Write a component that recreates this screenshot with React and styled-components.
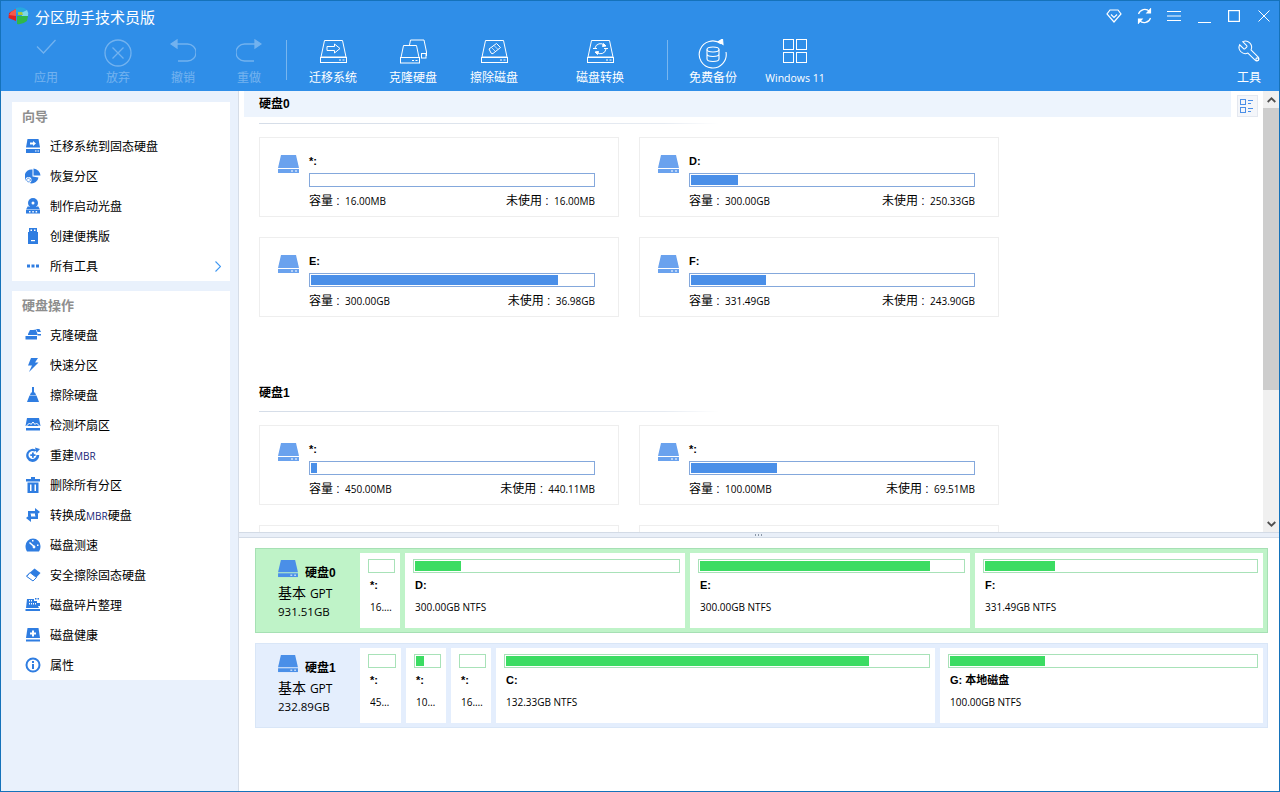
import React from 'react';
import styled, { createGlobalStyle } from 'styled-components';

const Global = createGlobalStyle`
  html, body { margin: 0; padding: 0; height: 792px; overflow: hidden; }
  body { font-family: "Liberation Sans", "Noto Sans CJK SC", sans-serif; font-size: 12px; color: #000; }
`;

const LATIN = '"Open Sans", "Noto Sans CJK SC", sans-serif';

const Window = styled.div`
  width: 1280px; height: 792px; box-sizing: border-box; display: flex; flex-direction: column;
  border: 1px solid #1572ba; background: #fff; overflow: hidden;
`;
const TitleBar = styled.div`
  height: 30px; flex: none; background: #2f8ee8; display: flex; align-items: center; color: #fff; padding-left: 7px;
`;
const TitleText = styled.div`
  margin-left: 6px; font-size: 15px; flex: 1;
`;
const WinButton = styled.div`
  width: 30px; height: 30px; display: flex; align-items: center; justify-content: center; flex: none;
`;
const WinButtons = styled.div`
  display: flex;
`;
const Toolbar = styled.div`
  height: 60px; flex: none; background: #2f8ee8; display: flex; padding-left: 9px;
`;
const Tool = styled.div`
  width: ${p => p.$w}px; flex: none; display: flex; flex-direction: column; align-items: center; color: #fff;
  opacity: ${p => (p.$off ? 0.32 : 1)};
`;
const ToolIcon = styled.div`
  height: 40px; padding-top: 8px; box-sizing: border-box; display: flex; align-items: flex-start; justify-content: center;
`;
const ToolLabel = styled.div`
  font-size: ${p => (p.$latin ? 11 : 12)}px; line-height: 14px; white-space: nowrap;
  ${p => p.$latin && `font-family: ${LATIN}; font-size: 10.5px;`}
`;
const ToolSep = styled.div`
  width: 1px; height: 40px; margin: 9px 0 0 ${p => p.$l || 0}px; background: #78b6ef; flex: none;
`;
const Spacer = styled.div` flex: 1; `;

const Body = styled.div`
  flex: 1; display: flex; min-height: 0;
`;
const Sidebar = styled.div`
  width: 238px; flex: none; box-sizing: border-box; background: #e9f1fc; border-right: 1px solid #d6dde7;
  padding: 11px 8px 0 11px; display: flex; flex-direction: column; gap: 10px;
`;
const Panel = styled.div`
  background: #fff; display: flex; flex-direction: column;
`;
const PanelTitle = styled.div`
  height: 29px; line-height: 30px; padding-left: 10px; color: #8e8e8e; font-weight: bold; font-size: 13px; flex: none;
`;
const NavRow = styled.div`
  height: 30px; box-sizing: border-box; display: flex; align-items: center; padding: 0 0 2px 12px; position: relative; flex: none;
`;
const NavIcon = styled.div`
  width: 18px; height: 18px; margin-right: 8px; display: flex; align-items: center; justify-content: center; position: relative; top: 1px;
`;
const NavText = styled.span`
  font-size: 12px; white-space: nowrap;
`;
const Latin = styled.span`
  font-family: ${LATIN}; font-size: 10px; color: #222a7a;
`;
const Chevron = styled.div`
  position: absolute; right: 9px; top: 10px; width: 6px; height: 11px; display: flex;
`;

const Main = styled.div`
  flex: 1; min-width: 0; display: flex; flex-direction: column;
`;
const Upper = styled.div`
  height: 441px; flex: none; display: flex;
`;
const Scroller = styled.div`
  flex: 1; min-width: 0; overflow: hidden;
`;
const HeaderRow = styled.div`
  display: flex; height: 26px; padding-left: 5px;
`;
const HeaderBand = styled.div`
  width: 987px; height: 26px; background: #edf4fd; display: flex; align-items: center; padding-left: 15px; box-sizing: border-box;
`;
const DiskTitle = styled.div`
  font-weight: bold; font-size: 12px; height: 20px; line-height: 20px;
`;
const ViewButton = styled.div`
  width: 21px; height: 22px; margin: 4px 0 0 6px; box-sizing: border-box; border: 1px solid #e4e8f0; background: #f4f6fa;
  display: flex; align-items: center; justify-content: center;
`;
const Divider = styled.div`
  height: 1px; width: 460px; margin: ${p => p.$t}px 0 13px 20px;
  background: linear-gradient(90deg, #d5dde8, #e6ebf2 88%, #ffffff);
`;
const SecondTitle = styled(DiskTitle)`
  margin: 66px 0 0 20px;
`;
const Cards = styled.div`
  display: grid; grid-template-columns: 360px 360px; grid-auto-rows: 80px; gap: 20px; margin-left: 20px;
`;
const Card = styled.div`
  border: 1px solid #eeeeee; box-sizing: border-box; display: flex; padding: 16px 23px 0 18px;
`;
const CardIcon = styled.div`
  width: 21px; height: 20px; margin: 1px 10px 0 0; flex: none;
`;
const CardBody = styled.div`
  flex: 1; min-width: 0; display: flex; flex-direction: column;
`;
const CardName = styled.div`
  font-weight: bold; font-size: 11px; height: 19px; line-height: 14px;
`;
const CardBar = styled.div`
  height: 14px; box-sizing: border-box; border: 1px solid #84a8dc; padding: 1px; background: #fff;
`;
const CardFill = styled.div`
  height: 100%; background: #4a8fe8;
`;
const CardMeta = styled.div`
  display: flex; justify-content: space-between; margin-top: 7px; font-size: 12px; line-height: 14px; white-space: nowrap;
`;
const Num = styled.span` font-family: ${LATIN}; font-size: 10px; margin-left: 2px; `;

const ScrollTrack = styled.div`
  width: 16px; flex: none; background: #f0f0f0; display: flex; flex-direction: column;
`;
const ScrollArrow = styled.div`
  height: 17px; flex: none; display: flex; align-items: center; justify-content: center; background: #f0f0f0;
`;
const ScrollThumb = styled.div`
  height: 282px; flex: none; background: #cdcdcd;
`;
const Splitter = styled.div`
  height: 6px; flex: none; box-sizing: border-box; background: #e9eff8; border-top: 1px solid #d3dbe6; border-bottom: 1px solid #d3dbe6;
  display: flex; align-items: center; justify-content: center; gap: 1px;
`;
const Dot = styled.span`
  width: 1px; height: 2px; background: #8b98a8; margin: 0 1px 0 0;
`;
const Lower = styled.div`
  flex: 1; padding: 10px 0 0 16px; display: flex; flex-direction: column; gap: 10px;
`;
const DiskRow = styled.div`
  width: 1013px; height: 85px; box-sizing: border-box; display: flex; gap: 5px; padding: 4px 4px 4px 0;
  background: ${p => (p.$on ? '#bff3c8' : '#e4eefd')}; border: 1px solid ${p => (p.$on ? '#a6e0b4' : '#d9e6f7')};
`;
const DiskHead = styled.div`
  width: 99px; flex: none; box-sizing: border-box; padding: 7px 0 0 22px;
`;
const HeadTop = styled.div`
  display: flex; align-items: center; height: 18px;
`;
const HeadName = styled.div`
  font-weight: bold; font-size: 12px; margin-left: 7px; margin-top: 7px; line-height: 14px;
`;
const HeadLine = styled.div`
  font-size: 14px; line-height: 20px; margin-top: 5px; white-space: nowrap;
  & > span { font-family: ${LATIN}; font-size: 12px; }
`;
const HeadSize = styled.div`
  font-family: ${LATIN}; font-size: 11.500px; line-height: 18px; margin-top: -1px;
`;
const Cell = styled.div`
  width: ${p => p.$w}px; flex: none; background: #fff; box-sizing: border-box; padding: 6px 5px 0 8px; display: flex; flex-direction: column;
`;
const CellBar = styled.div`
  height: 14px; box-sizing: border-box; border: 1px solid #a8e2b8; padding: 1px; background: #fff; flex: none;
`;
const CellFill = styled.div`
  height: 100%; background: #3bdc62;
`;
const CellName = styled.div`
  font-weight: bold; font-size: 11px; line-height: 14px; margin: 5px 0 0 2px; white-space: nowrap;
`;
const CellInfo = styled.div`
  font-family: ${LATIN}; font-size: 10px; line-height: 14px; margin: 8px 3px 0 2px; white-space: nowrap; overflow: hidden; text-overflow: ellipsis;
`;

const Stroke = ({ w, h, vb, sw = 1, children, op }) => (
  <svg width={w} height={h} viewBox={vb || `0 0 ${w} ${h}`} fill="none" stroke="#fff" strokeWidth={sw} opacity={op}>{children}</svg>
);

const DiskBase = () => (
  <>
    <path d="M4.500 1.500H22.500L26 18H1Z" />
    <rect x=".5" y="18.500" width="26" height="5" />
    <path d="M19 21h2M22.500 21h2" />
  </>
);
const ToolIcons = {
  check: <Stroke w={20} h={15} sw={1.3}><path d="M1 7.500 7.500 14 19.500 1" /></Stroke>,
  cancel: <Stroke w={28} h={28} sw={1.3}><circle cx="14" cy="14" r="13" /><path d="M8.500 8.500 19.500 19.500M19.500 8.500 8.500 19.500" /></Stroke>,
  undo: <Stroke w={26} h={24} sw={1.3}><path d="M7 5H17.500a8.500 8.500 0 0 1 0 17H8" /><path d="M1 5 7 1V9Z" fill="#fff" /></Stroke>,
  redo: <Stroke w={26} h={24} sw={1.3}><path d="M19 5H8.500a8.500 8.500 0 0 0 0 17H18" /><path d="M25 5 19 1V9Z" fill="#fff" /></Stroke>,
  migrate: <Stroke w={27} h={24}><DiskBase /><path d="M7 7.500H14.500V5L20 9.500 14.500 14V11.500H7Z" /></Stroke>,
  clone: <Stroke w={27} h={25}><path d="M9.500 6 10.500 1H24L26.500 13V17" /><path d="M3.500 6.500H16.500L19 18.500H1Z" /><rect x=".5" y="18.500" width="19" height="5.500" /><rect x="21.500" y="14.500" width="4.500" height="4.500" /><path d="M12 21.500h2M15.500 21.500h2" /></Stroke>,
  erase: <Stroke w={27} h={24}><DiskBase /><path d="M8 10 15.500 4.500 19.500 8.500 12 14.500Q11 15 10 14Z" /><path d="M10.500 8.500 14.500 12.500M13 6.500 17 10.500" strokeWidth=".7" /></Stroke>,
  convert: <Stroke w={27} h={24}><DiskBase /><path d="M8 9a5.500 5.500 0 0 1 9.500-2.500M19 10a5.500 5.500 0 0 1-9.500 3" /><path d="M16.500 4.500 19 7 15.500 7.500ZM10.500 15.500 8 13 11.500 12.500Z" fill="#fff" /><path d="M6 9.500h4M17 9.500h4" /></Stroke>,
  backup: <Stroke w={30} h={30} sw={1.1}><path d="M23 4.800A13.500 13.500 0 1 0 28 13" /><path d="M20.500 2.500 24.500 0 25 5.500Z" fill="#fff" /><ellipse cx="15" cy="10.500" rx="6" ry="2.500" /><path d="M9 10.500V20c0 1.500 2.700 2.500 6 2.500s6-1 6-2.500V10.500M9 15c0 1.500 2.700 2.500 6 2.500s6-1 6-2.500" /></Stroke>,
  windows: <Stroke w={24} h={24}><rect x=".5" y=".5" width="10" height="10" /><rect x="13.500" y=".5" width="10" height="10" /><rect x=".5" y="13.500" width="10" height="10" /><rect x="13.500" y="13.500" width="10" height="10" /></Stroke>,
  tools: (
    <Stroke w={25} h={25} vb="0 0 24 24" sw={1}>
      <g transform="translate(24 0) scale(-1 1)">
        <path d="M14.700 6.300a1 1 0 0 0 0 1.400l1.600 1.600a1 1 0 0 0 1.400 0l3.770-3.770a6 6 0 0 1-7.940 7.940l-6.910 6.910a2.120 2.120 0 0 1-3-3l6.910-6.910a6 6 0 0 1 7.940-7.940l-3.760 3.760z" />
      </g>
      <circle cx="19.500" cy="19.500" r="1.400" />
    </Stroke>
  ),
};

const B = '#2f7de1';
const Solid = ({ children, size = 16 }) => <svg width={size} height={size} viewBox="0 0 16 16" fill={B}>{children}</svg>;
const NavIcons = {
  migrate: <Solid><path d="M2.500 1H13.500L15 9.500H1Z" /><rect x="1" y="11" width="14" height="4" /><path d="M5 4.500H8V3l3 2.500L8 8V6.500H5Z" fill="#fff" /><rect x="10" y="12.500" width="1.500" height="1" fill="#fff" /><rect x="12.500" y="12.500" width="1.500" height="1" fill="#fff" /></Solid>,
  restore: <Solid><path d="M8.500 0.500A7.500 7.500 0 0 1 15.500 7.500H8.500Z" /><path d="M7.500 1.500V8.500L13.500 9.500A7 7 0 1 1 7.500 1.500Z" /><circle cx="3.500" cy="12" r="3" fill="#fff" /><circle cx="3.500" cy="12" r="1.800" fill="none" stroke={B} strokeWidth="1" strokeDasharray="1.500 .7" /></Solid>,
  boot: <Solid><circle cx="8" cy="5" r="5" /><circle cx="8" cy="5" r="1.500" fill="#fff" /><path d="M3 8 1 11.500H15L13 8 12 9H4Z" /><rect x="1" y="12" width="14" height="3.500" /><rect x="4" y="13" width="1.500" height="1.500" fill="#fff" /><rect x="7.300" y="13" width="1.500" height="1.500" fill="#fff" /><rect x="10.600" y="13" width="1.500" height="1.500" fill="#fff" /></Solid>,
  usb: <Solid><rect x="4" y="0" width="8" height="4" /><rect x="5.500" y="1.500" width="1.500" height="1.500" fill="#fff" /><rect x="9" y="1.500" width="1.500" height="1.500" fill="#fff" /><rect x="3" y="4" width="10" height="12" /><rect x="6" y="12" width="4" height="1.200" fill="#fff" /></Solid>,
  dots: <Solid><rect x="2" y="6.500" width="3" height="3" /><rect x="6.500" y="6.500" width="3" height="3" /><rect x="11" y="6.500" width="3" height="3" /></Solid>,
  clone: <Solid><path d="M3 7 5 3H11L12.500 7V8H3Z" /><rect x="0.500" y="9" width="11.500" height="3.500" /><path d="M8 2H14.500L16 5H12.500L11.500 2.500Z" /><rect x="12.500" y="7" width="3.500" height="1.500" /></Solid>,
  bolt: <Solid><path d="M6 1H13L10 5.500H13.500L4 15 7 8.500H3Z" /></Solid>,
  broom: <Solid><rect x="7" y="0" width="2" height="6" /><path d="M6 5.500H10L11 8H5Z" /><path d="M4.500 8.500H11.500L14 15H2Z" /></Solid>,
  scan: <Solid><path d="M2 1H14L15.500 9H0.500Z" /><path d="M1.500 9 4.500 6 6 7.500 8 5 10 7.500 11.500 6 14.500 9" fill="none" stroke="#fff" strokeWidth="1" /><rect x="1" y="11" width="14" height="2.500" /></Solid>,
  rebuild: <Solid><path d="M12 3.500A6.500 6.500 0 1 0 14.200 8H11.500A4 4 0 1 1 9.500 4.500Z" /><path d="M10 0.500 15 2 11.500 6Z" /><path d="M7 5.500H8.800V7.200H10.500V9H8.800V10.700H7V9H5.300V7.200H7Z" /></Solid>,
  trash: <Solid><rect x="6" y="0" width="4" height="2" /><rect x="1" y="2" width="14" height="2.500" /><path d="M2.500 5.500H13.500V16H2.500ZM5 7.500V14H6.500V7.500ZM9.500 7.500V14H11V7.500Z" fillRule="evenodd" /></Solid>,
  swap: <Solid><path d="M3 4H10V1L15 5 10 9V6.500H5.500V9H3Z" /><path d="M13 12H6V15L1 11 6 7V9.500H10.500V7H13Z" /></Solid>,
  gauge: <Solid><path d="M8 1.500A7.500 7.500 0 0 0 0.500 9C.5 11 1 13 2 14.500H14C15 13 15.500 11 15.500 9A7.500 7.500 0 0 0 8 1.500Z" /><path d="M4.500 5.500 9 9.500" stroke="#fff" strokeWidth="1.500" /><circle cx="9" cy="10" r="1.400" fill="#fff" /><rect x="7" y="3" width="1.500" height="1.500" fill="#fff" /><rect x="12" y="7.500" width="1.500" height="1.500" fill="#fff" /></Solid>,
  eraser: <Solid><path d="M9.500 1.500 15.500 6 8 14 1 9Z" /><path d="M5 5.500 11.500 10.500 8 14 1.800 9.500Z" fill="#fff" stroke={B} strokeWidth="1" /></Solid>,
  defrag: <Solid><path d="M2 2H9V4H12V6H15V9H13L14 11H1Z" /><rect x="0.500" y="12" width="14.500" height="2" /><g fill="#fff"><rect x="4" y="3" width="1" height="1.500" /><rect x="6" y="3" width="1" height="1.500" /><rect x="4" y="6" width="1" height="1.500" /><rect x="6" y="6" width="1" height="1.500" /><rect x="8" y="6" width="1" height="1.500" /><rect x="10" y="6" width="1" height="1.500" /></g><rect x="10" y="1" width="1.500" height="1.500" /><rect x="12.500" y="1" width="1.500" height="1.500" /></Solid>,
  health: <Solid><path d="M2.500 1H13.500L15 11H1Z" /><path d="M7 3.500H9V5.500H11V7.500H9V9.500H7V7.500H5V5.500H7Z" fill="#fff" /><rect x="1" y="12.500" width="14" height="2" /></Solid>,
  info: <Solid><path d="M8 0.500a7.500 7.500 0 1 0 0 15 7.500 7.500 0 0 0 0-15ZM8 2.500a5.500 5.500 0 1 1 0 11 5.500 5.500 0 0 1 0-11Z" fillRule="evenodd" /><rect x="7" y="4" width="2" height="2" /><rect x="7" y="7" width="2" height="5" /></Solid>,
};

const SmallDisk = ({ w = 21, h = 19, c = '#6aa2ee' }) => (
  <svg width={w} height={h} viewBox="0 0 21 19">
    <path d="M3 0H18L21 13H0Z" fill={c} />
    <rect x="0" y="14" width="21" height="4" fill={c} />
    <rect x="13" y="15.500" width="2" height="1" fill="#fff" />
    <rect x="17" y="15.500" width="2" height="1" fill="#fff" />
  </svg>
);

const Logo = () => (
  <svg width="21" height="18" viewBox="0 0 21 18">
    <path d="M8 2 1 6 .5 11 8 14Z" fill="#e02121" />
    <path d="M3 5 8 2V9L1 8Z" fill="#f45a4a" />
    <path d="M8 1Q15-1 19 3L12 7 8 6Z" fill="#27a8e0" />
    <path d="M13 6 19 3Q21 6 20 9L14 9Z" fill="#7cd6e8" />
    <path d="M9 9H20L19 14Q14 18 9 17Z" fill="#2fb84a" />
    <path d="M10 5H14L15 8H10Z" fill="#a8c834" />
  </svg>
);

const items1 = [
  ['migrate', '迁移系统到固态硬盘'], ['restore', '恢复分区'], ['boot', '制作启动光盘'], ['usb', '创建便携版'], ['dots', '所有工具'],
];
const items2 = [
  ['clone', '克隆硬盘'], ['bolt', '快速分区'], ['broom', '擦除硬盘'], ['scan', '检测坏扇区'],
  ['rebuild', <>重建<Latin>MBR</Latin></>], ['trash', '删除所有分区'], ['swap', <>转换成<Latin>MBR</Latin>硬盘</>],
  ['gauge', '磁盘测速'], ['eraser', '安全擦除固态硬盘'], ['defrag', '磁盘碎片整理'], ['health', '磁盘健康'], ['info', '属性'],
];

const PartCard = ({ name, pct, cap, free }) => (
  <Card>
    <CardIcon><SmallDisk /></CardIcon>
    <CardBody>
      <CardName>{name}</CardName>
      <CardBar>{pct > 0 && <CardFill style={{ width: `${pct}%` }} />}</CardBar>
      <CardMeta>
        <span>容量 : <Num>{cap}</Num></span>
        <span>未使用 : <Num>{free}</Num></span>
      </CardMeta>
    </CardBody>
  </Card>
);

const PartCell = ({ w, name, pct, info }) => (
  <Cell $w={w}>
    <CellBar>{pct > 0 && <CellFill style={{ width: `${pct}%` }} />}</CellBar>
    <CellName>{name}</CellName>
    <CellInfo>{info}</CellInfo>
  </Cell>
);

const DiskHeadBlock = ({ name, size }) => (
  <DiskHead>
    <HeadTop><SmallDisk w={20} h={18} c="#4a8fe8" /><HeadName>{name}</HeadName></HeadTop>
    <HeadLine>基本 <span>GPT</span></HeadLine>
    <HeadSize>{size}</HeadSize>
  </DiskHead>
);

export default function App() {
  return (
    <>
      <Global />
      <Window>
        <TitleBar>
          <Logo />
          <TitleText>分区助手技术员版</TitleText>
          <WinButtons>
            <WinButton><Stroke w={16} h={14} sw={1.2}><path d="M4 1H12L15 5 8 13 1 5Z" /><path d="M5 5.500 8 8.500 11 5.500" /></Stroke></WinButton>
            <WinButton><Stroke w={15} h={16} sw={1.2}><path d="M1.500 6A6.500 6.500 0 0 1 12.500 3.500M13.500 10A6.500 6.500 0 0 1 2.500 12.500" /><path d="M13.500 1V5H10ZM1.500 15V11H5Z" fill="#fff" /></Stroke></WinButton>
            <WinButton><Stroke w={14} h={12} sw={1}><path d="M0 1.500H14M0 6H14M0 10.500H14" /></Stroke></WinButton>
            <WinButton><Stroke w={13} h={14} sw={1}><path d="M0 13.500H13" /></Stroke></WinButton>
            <WinButton><Stroke w={12} h={12} sw={1.2}><rect x=".6" y=".6" width="10.800" height="10.800" /></Stroke></WinButton>
            <WinButton><Stroke w={12} h={12} sw={1}><path d="M.5.500 11.500 11.500M11.500.500 .5 11.500" /></Stroke></WinButton>
          </WinButtons>
        </TitleBar>
        <Toolbar>
          <Tool $w={72} $off><ToolIcon>{ToolIcons.check}</ToolIcon><ToolLabel>应用</ToolLabel></Tool>
          <Tool $w={72} $off><ToolIcon>{ToolIcons.cancel}</ToolIcon><ToolLabel>放弃</ToolLabel></Tool>
          <Tool $w={58} $off><ToolIcon>{ToolIcons.undo}</ToolIcon><ToolLabel>撤销</ToolLabel></Tool>
          <Tool $w={74} $off><ToolIcon>{ToolIcons.redo}</ToolIcon><ToolLabel>重做</ToolLabel></Tool>
          <ToolSep />
          <Tool $w={92}><ToolIcon>{ToolIcons.migrate}</ToolIcon><ToolLabel>迁移系统</ToolLabel></Tool>
          <Tool $w={68}><ToolIcon>{ToolIcons.clone}</ToolIcon><ToolLabel>克隆硬盘</ToolLabel></Tool>
          <Tool $w={94}><ToolIcon>{ToolIcons.erase}</ToolIcon><ToolLabel>擦除磁盘</ToolLabel></Tool>
          <Tool $w={118}><ToolIcon>{ToolIcons.convert}</ToolIcon><ToolLabel>磁盘转换</ToolLabel></Tool>
          <ToolSep $l={8} />
          <Tool $w={90}><ToolIcon>{ToolIcons.backup}</ToolIcon><ToolLabel>免费备份</ToolLabel></Tool>
          <Tool $w={74}><ToolIcon>{ToolIcons.windows}</ToolIcon><ToolLabel $latin>Windows 11</ToolLabel></Tool>
          <Spacer />
          <Tool $w={60}><ToolIcon>{ToolIcons.tools}</ToolIcon><ToolLabel>工具</ToolLabel></Tool>
        </Toolbar>
        <Body>
          <Sidebar>
            <Panel>
              <PanelTitle>向导</PanelTitle>
              {items1.map(([ic, t], i) => (
                <NavRow key={i}>
                  <NavIcon>{NavIcons[ic]}</NavIcon><NavText>{t}</NavText>
                  {ic === 'dots' && (
                    <Chevron><svg width="6" height="11" viewBox="0 0 6 11" fill="none" stroke="#3f97f2" strokeWidth="1.100"><path d="M.5.500 5.500 5.500 .5 10.500" /></svg></Chevron>
                  )}
                </NavRow>
              ))}
            </Panel>
            <Panel>
              <PanelTitle>硬盘操作</PanelTitle>
              {items2.map(([ic, t], i) => (
                <NavRow key={i}><NavIcon>{NavIcons[ic]}</NavIcon><NavText>{t}</NavText></NavRow>
              ))}
            </Panel>
          </Sidebar>
          <Main>
            <Upper>
              <Scroller>
                <HeaderRow>
                  <HeaderBand><DiskTitle>硬盘0</DiskTitle></HeaderBand>
                  <ViewButton>
                    <svg width="15" height="15" viewBox="0 0 15 15" fill="none" stroke="#4a8fe8" strokeWidth="1"><rect x=".5" y=".5" width="5" height="5" /><rect x=".5" y="8.500" width="5" height="5" /><path d="M8 1.500h5M8 4.500h3M8 9.500h5M8 12.500h3" /></svg>
                  </ViewButton>
                </HeaderRow>
                <Divider $t={6} />
                <Cards>
                  <PartCard name="*:" pct={0} cap="16.00MB" free="16.00MB" />
                  <PartCard name="D:" pct={16.6} cap="300.00GB" free="250.33GB" />
                  <PartCard name="E:" pct={87.7} cap="300.00GB" free="36.98GB" />
                  <PartCard name="F:" pct={26.5} cap="331.49GB" free="243.90GB" />
                </Cards>
                <SecondTitle>硬盘1</SecondTitle>
                <Divider $t={8} />
                <Cards>
                  <PartCard name="*:" pct={2.2} cap="450.00MB" free="440.11MB" />
                  <PartCard name="*:" pct={30.5} cap="100.00MB" free="69.51MB" />
                  <Card />
                  <Card />
                </Cards>
              </Scroller>
              <ScrollTrack>
                <ScrollArrow><svg width="9" height="6" viewBox="0 0 9 6" fill="none" stroke="#505050" strokeWidth="1.800"><path d="M.7 5 4.500 1.300 8.300 5" /></svg></ScrollArrow>
                <ScrollThumb />
                <Spacer />
                <ScrollArrow><svg width="9" height="6" viewBox="0 0 9 6" fill="none" stroke="#505050" strokeWidth="1.800"><path d="M.7 1 4.500 4.700 8.300 1" /></svg></ScrollArrow>
              </ScrollTrack>
            </Upper>
            <Splitter><Dot /><Dot /><Dot /></Splitter>
            <Lower>
              <DiskRow $on>
                <DiskHeadBlock name="硬盘0" size="931.51GB" />
                <PartCell w={40} name="*:" pct={0} info="16.00MB" />
                <PartCell w={280} name="D:" pct={17.4} info="300.00GB NTFS" />
                <PartCell w={280} name="E:" pct={87.5} info="300.00GB NTFS" />
                <PartCell w={288} name="F:" pct={26} info="331.49GB NTFS" />
              </DiskRow>
              <DiskRow>
                <DiskHeadBlock name="硬盘1" size="232.89GB" />
                <PartCell w={41} name="*:" pct={0} info="450.00MB" />
                <PartCell w={40} name="*:" pct={33} info="100.00MB" />
                <PartCell w={40} name="*:" pct={0} info="16.00MB" />
                <PartCell w={439} name="C:" pct={86} info="132.33GB NTFS" />
                <PartCell w={323} name="G: 本地磁盘" pct={31} info="100.00GB NTFS" />
              </DiskRow>
            </Lower>
          </Main>
        </Body>
      </Window>
    </>
  );
}
